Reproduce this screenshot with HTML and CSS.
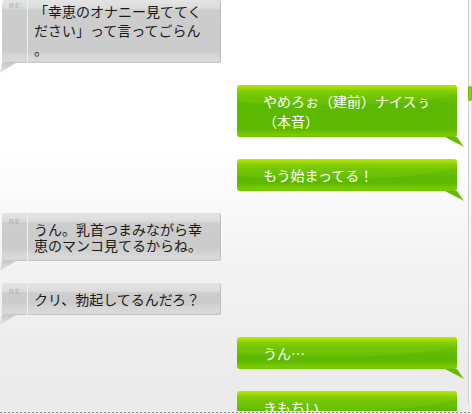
FILE: index.html
```html
<!DOCTYPE html>
<html lang="ja">
<head>
<meta charset="utf-8">
<link rel="stylesheet" href="styles.css">
</head>
<body>
<div class="screen">
  <div class="viewport">
    <div class="chat">
      <div class="bubble gray first">
        <span class="re">RE:</span>
        <p class="txt">「幸恵のオナニー見ててください」って言ってごらん。</p>
      </div>
      <div class="bubble green">
        <p class="txt">やめろぉ（建前）ナイスぅ（本音）</p>
      </div>
      <div class="bubble green">
        <p class="txt">もう始まってる！</p>
      </div>
      <div class="bubble gray">
        <span class="re">RE:</span>
        <p class="txt">うん。乳首つまみながら幸恵のマンコ見てるからね。</p>
      </div>
      <div class="bubble gray">
        <span class="re">RE:</span>
        <p class="txt">クリ、勃起してるんだろ？</p>
      </div>
      <div class="bubble green">
        <p class="txt">うん…</p>
      </div>
      <div class="bubble green">
        <p class="txt">きもちい</p>
      </div>
    </div>
    <div class="scrollbar"><div class="thumb"></div></div>
  </div>
  <div class="dots"></div>
</div>
</body>
</html>
```

FILE: styles.css
```css
html, body {
  margin: 0;
  padding: 0;
  width: 472px;
  height: 414px;
  overflow: hidden;
}
body {
  background: linear-gradient(to bottom, #ffffff 0, #ffffff 150px, #f3f3f3 260px, #ebebeb 380px, #ebebeb 100%);
  font-family: "Noto Sans CJK JP", "Noto Sans", sans-serif;
}
.screen {
  width: 472px;
  height: 414px;
}
.viewport {
  position: relative;
  height: 411px;
  overflow: hidden;
}
.chat {
  display: flex;
  flex-direction: column;
  gap: 22px;
}
.bubble {
  position: relative;
  box-sizing: border-box;
  border-radius: 3px;
}
.txt {
  margin: 0;
  width: 170px;
  font-size: 14px;
  line-break: anywhere;
  word-break: break-all;
}

/* gray (incoming) */
.gray {
  margin-left: 2px;
  width: 219px;
  padding: 8px 0 8px 32px;
  background: linear-gradient(to bottom, #e4e4e4 0, #dcdcdc 8px, #cdcdcd 10px, #cbcbcb calc(100% - 12px), #d3d3d3 calc(100% - 9px), #dadada calc(100% - 2px), #c4c4c4 100%);
  box-shadow: inset -1px 0 0 #bdbdbd, inset 0 -1px 0 #c8c8c8;
  color: #1a1a1a;
}
.gray::before {
  content: "";
  position: absolute;
  left: 25px;
  top: 0;
  bottom: 0;
  width: 1px;
  background: #ececec;
}
.gray::after {
  content: "";
  position: absolute;
  left: -2px;
  top: 100%;
  width: 16px;
  height: 10px;
  background: linear-gradient(to bottom, #c8c8c8, #e4e4e4);
  clip-path: polygon(2px 0, 16px 0, 0 10px);
}
.gray .txt {
  line-height: 16px;
}
.gray.first {
  padding-top: 2px;
  padding-bottom: 4px;
}
.gray.first .txt {
  line-height: 19px;
}
.gray.first .re {
  top: 2px;
}
.re {
  position: absolute;
  left: 7px;
  top: 5px;
  font-family: "Liberation Sans", sans-serif;
  font-size: 7px;
  line-height: 7px;
  letter-spacing: 1px;
  color: #aaaaaa;
}

/* green (outgoing) */
.green {
  margin-left: 237px;
  width: 220px;
  padding: 6px 0 6px 26px;
  background: linear-gradient(to bottom, #b6e800 0, #a2dc00 3px, #80cc00 6px, #6cc200 10px, #62bc00 16px, #5cb800 20px, #5cb800 calc(100% - 8px), #68bf00 calc(100% - 6px), #7ccb04 calc(100% - 2px), #6fc200 100%);
  color: #ffffff;
}
.green::before {
  content: "";
  position: absolute;
  left: 0;
  right: 0;
  top: 6px;
  height: 14px;
  border-radius: 0 0 60% 40% / 0 0 100% 30%;
  background: rgba(150, 220, 30, 0.18);
}
.green::after {
  content: "";
  position: absolute;
  left: 208px;
  top: 100%;
  width: 19px;
  height: 10px;
  background: linear-gradient(to bottom, #5cb800, #74c600);
  clip-path: polygon(0 0, 12px 0, 19px 10px);
}
.green .txt {
  position: relative;
  line-height: 20px;
}

/* scrollbar overlay */
.scrollbar {
  position: absolute;
  left: 468px;
  top: 0;
  width: 4px;
  height: 403px;
  box-sizing: border-box;
  border-left: 1px solid #cfcfcf;
  border-right: 1px solid #dedede;
  background: #f6f6f6;
}
.thumb {
  position: absolute;
  left: -1px;
  top: 86px;
  width: 4px;
  height: 15px;
  box-sizing: border-box;
  border: 1px solid #66bd00;
  border-radius: 2px;
  background: #8fd400;
}

.dots {
  margin-top: 1px;
  height: 1px;
  background: repeating-linear-gradient(to right, #8a8a8a 0, #8a8a8a 2px, transparent 2px, transparent 4px);
}
```
